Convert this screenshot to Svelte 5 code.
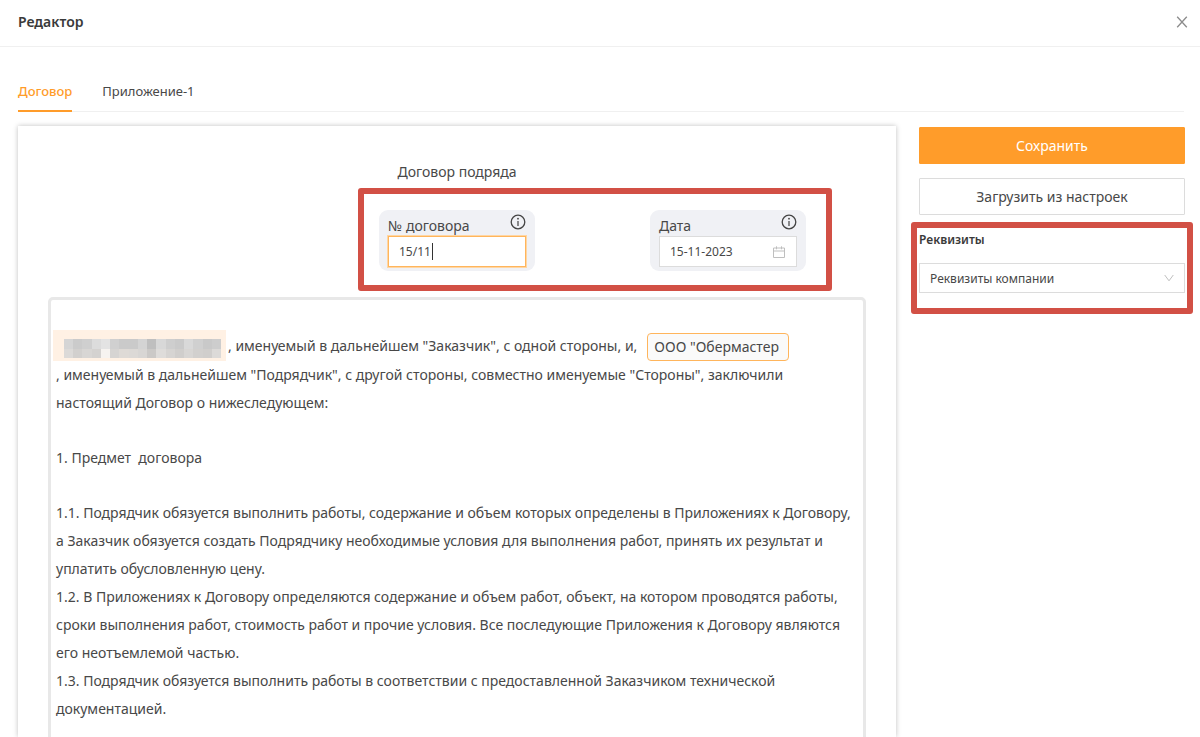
<script lang="ts">
  const tabs = ['Договор', 'Приложение-1'];
  const requisites = ['Реквизиты компании'];

  let activeTab = $state('Договор');
  let contractNumber = $state('15/11');
  let contractDate = $state('15-11-2023');
  let contractor = $state('ООО "Обермастер');
  let requisite = $state('Реквизиты компании');

  // Hidden customer name, two rows of grey blocks
  const maskRows = [
    ['#d5d5d5', '#cbcbcb', '#cfcfcf', '#dcdcdc', '#e3e3e3', '#d0d0d0', '#cacaca', '#cacaca', '#d4d4d4', '#bfbfbf', '#d8d8d8', '#cecece', '#cacaca', '#d9d9d9', '#d0d0d0', '#c9c9c9', '#cdcdcd'],
    ['#dcdad8', '#d2d0ce', '#d8d6d4', '#d4d2d0', '#f6f3f0', '#d6d4d2', '#dedad6', '#dcd9d6', '#d8d6d4', '#cbc9c7', '#dedcda', '#d6d4d2', '#d0cecc', '#d8d6d4', '#d2d0ce', '#d0cecc', '#dcdad8']
  ];

  const intro = [
    ', именуемый в дальнейшем "Подрядчик", с другой стороны, совместно именуемые "Стороны", заключили',
    'настоящий Договор о нижеследующем:'
  ];

  const clauses = [
    '1.1. Подрядчик обязуется выполнить работы, содержание и объем которых определены в Приложениях к Договору,',
    'а Заказчик обязуется создать Подрядчику необходимые условия для выполнения работ, принять их результат и',
    'уплатить обусловленную цену.',
    '1.2. В Приложениях к Договору определяются содержание и объем работ, объект, на котором проводятся работы,',
    'сроки выполнения работ, стоимость работ и прочие условия. Все последующие Приложения к Договору являются',
    'его неотъемлемой частью.',
    '1.3. Подрядчик обязуется выполнить работы в соответствии с предоставленной Заказчиком технической',
    'документацией.'
  ];
</script>

{#snippet infoIcon()}
  <svg class="info" viewBox="0 0 16 16" aria-hidden="true">
    <circle cx="8" cy="8" r="6.8" fill="none" stroke="#444" stroke-width="1.3" />
    <path d="M8 7v5" stroke="#444" stroke-width="1.2" />
    <circle cx="8" cy="4.7" r="0.9" fill="#444" />
  </svg>
{/snippet}

<div class="editor">
  <header class="header">
    <h1>Редактор</h1>
    <button class="close" aria-label="Закрыть">
      <svg viewBox="0 0 12 12" aria-hidden="true">
        <path d="M1.2 0.8 10.8 11.2M10.8 0.8 1.2 11.2" fill="none" stroke="#8c8c8c" stroke-width="1.3" />
      </svg>
    </button>
  </header>

  <nav class="tabs">
    {#each tabs as tab}
      <button class="tab" class:active={activeTab === tab} onclick={() => (activeTab = tab)}>{tab}</button>
    {/each}
  </nav>

  <main class="body">
    <section class="page">
      <h2>Договор подряда</h2>

      <div class="fields highlight">
        <div class="field">
          <div class="field-head">
            <label for="number">№ договора</label>
            {@render infoIcon()}
          </div>
          <div class="control focused">
            <input id="number" class="number" bind:value={contractNumber} />
            <span class="caret"></span>
          </div>
        </div>

        <div class="field">
          <div class="field-head">
            <label for="date">Дата</label>
            {@render infoIcon()}
          </div>
          <div class="control">
            <input id="date" class="date" bind:value={contractDate} />
            <svg class="calendar" viewBox="0 0 12 12" aria-hidden="true">
              <path d="M0.5 2h11v9.5h-11zM0.5 5h11M3.5 0.3v3M8.5 0.3v3" fill="none" stroke="#bfbfbf" />
            </svg>
          </div>
        </div>
      </div>

      <article class="text">
        <div class="parties">
          <span class="masked">
            <svg viewBox="0 0 17 2" preserveAspectRatio="none" shape-rendering="crispEdges" aria-hidden="true">
              {#each maskRows as row, y}
                {#each row as color, x}
                  <rect {x} {y} width="1" height="1" fill={color} />
                {/each}
              {/each}
            </svg>
          </span>
          <span class="customer">, именуемый в дальнейшем "Заказчик", с одной стороны, и,</span>
          <input class="contractor" aria-label="Подрядчик" bind:value={contractor} />
        </div>
        <p>
          {#each intro as line}<span class="line">{line}</span>{/each}
        </p>
        <h3>1. Предмет&nbsp; договора</h3>
        <p>
          {#each clauses as line}<span class="line">{line}</span>{/each}
        </p>
      </article>
    </section>

    <aside class="side">
      <button class="btn primary">Сохранить</button>
      <button class="btn">Загрузить из настроек</button>
      <div class="requisites highlight">
        <label for="requisite">Реквизиты</label>
        <div class="select">
          <select id="requisite" bind:value={requisite}>
            {#each requisites as item}
              <option value={item}>{item}</option>
            {/each}
          </select>
          <svg viewBox="0 0 10 8" aria-hidden="true">
            <path d="M0.7 1 5 6.8 9.3 1" fill="none" stroke="#bfbfbf" />
          </svg>
        </div>
      </div>
    </aside>
  </main>
</div>

<style>
  :global(body) {
    margin: 0;
    background: #fff;
  }

  .editor {
    height: 100vh;
    display: flex;
    flex-direction: column;
    overflow: hidden;
    font-family: 'Noto Sans', 'Open Sans', sans-serif;
    font-size: 14px;
    color: #484848;
  }

  button,
  input,
  select {
    font: inherit;
    color: inherit;
    box-sizing: border-box;
  }

  .header {
    display: flex;
    flex: none;
    align-items: center;
    justify-content: space-between;
    box-sizing: border-box;
    height: 47px;
    padding: 0 12px 3px 18px;
    border-bottom: 1px solid #f0f0f0;
  }

  h1 {
    margin: 0;
    font-size: 14px;
    font-weight: 600;
    color: #3a3a3a;
  }

  .close {
    display: flex;
    padding: 0;
    border: 0;
    background: none;
    cursor: pointer;
  }

  .close svg {
    width: 12px;
    height: 12px;
  }

  .tabs {
    display: flex;
    flex: none;
    gap: 30px;
    margin: 24px 16px 0 18px;
    border-bottom: 1px solid #f0f0f0;
  }

  .tab {
    height: 41px;
    margin-bottom: -1px;
    padding: 0;
    border: 0;
    border-bottom: 2px solid transparent;
    background: none;
    font-size: 13px;
    cursor: pointer;
  }

  .tab.active {
    border-color: #ff9c2a;
    color: #ff9c2a;
    font-weight: 500;
  }

  .body {
    display: flex;
    flex: 1;
    gap: 23px;
    min-height: 0;
    padding: 14px 15px 0 18px;
  }

  .page {
    flex: 1;
    min-width: 0;
    padding: 34px 30px 0;
    box-shadow: 0 0 5px rgba(0, 0, 0, 0.25);
  }

  h2 {
    margin: 0;
    font-size: 14px;
    font-weight: 400;
    line-height: 24px;
    text-align: center;
  }

  .highlight {
    border: 6px solid #d25045;
    border-radius: 3px;
  }

  .fields {
    display: flex;
    justify-content: space-between;
    width: 427px;
    margin: 4px 34px 6px auto;
    padding: 16px 20px 14px 15px;
  }

  .field {
    box-sizing: border-box;
    width: 156px;
    height: 61px;
    padding: 4px 9px;
    border-radius: 9px;
    background: #f0f1f5;
  }

  .field-head {
    display: flex;
    justify-content: space-between;
    height: 22px;
    line-height: 24px;
  }

  .info {
    width: 16px;
    height: 16px;
  }

  .control {
    display: flex;
    align-items: center;
    box-sizing: border-box;
    height: 31px;
    padding: 0 11px 0 10px;
    border: 1px solid #dcdcdc;
    background: #fff;
    font-size: 12px;
  }

  .control.focused {
    border-color: #ffb55c;
    box-shadow: 0 0 0 1px #ffd6a3;
  }

  .control input {
    min-width: 0;
    padding: 0;
    border: 0;
    outline: 0;
    background: none;
  }

  .number {
    width: 33px;
  }

  .date {
    flex: 1;
  }

  .caret {
    width: 1px;
    height: 17px;
    background: #333;
  }

  .calendar {
    width: 12px;
    height: 12px;
  }

  .text {
    height: 600px;
    padding: 30px 5px 0;
    border: 3px solid #e8e8e8;
    border-radius: 5px;
    line-height: 28px;
    white-space: nowrap;
  }

  .parties {
    display: flex;
    align-items: flex-start;
    height: 31px;
  }

  .masked {
    display: flex;
    box-sizing: border-box;
    width: 173px;
    height: 31px;
    margin-left: -3px;
    margin-right: 2px;
    padding: 9px 5px 3px 11px;
    background: #fff1e4;
  }

  .masked svg {
    width: 157px;
    height: 19px;
  }

  .customer {
    line-height: 32px;
  }

  .contractor {
    width: 142px;
    height: 28px;
    margin-top: 3px;
    margin-left: 10px;
    padding: 0 6px;
    border: 1px solid #ffb55c;
    border-radius: 4px;
    background: #fafafa;
  }

  p,
  h3 {
    margin: 0 0 27px;
    font-size: 14px;
    font-weight: 400;
  }

  .line {
    display: block;
  }

  .side {
    display: flex;
    flex-direction: column;
    width: 266px;
    padding-top: 1px;
  }

  .btn {
    height: 37px;
    margin-bottom: 14px;
    border: 1px solid #dcdcdc;
    border-radius: 1px;
    background: #fff;
    cursor: pointer;
  }

  .btn.primary {
    border-color: #ff9c2a;
    background: #ff9c2a;
    color: #fff;
  }

  .requisites {
    display: flex;
    flex-direction: column;
    gap: 13px;
    margin: -7px -8px 0;
    padding: 2px 2px 15px;
    font-size: 12px;
  }

  .requisites label {
    line-height: 20px;
    font-weight: 600;
    color: #3a3a3a;
  }

  .select {
    display: flex;
    align-items: center;
    box-sizing: border-box;
    height: 30px;
    padding-right: 10px;
    border: 1px solid #dcdcdc;
  }

  .select select {
    flex: 1;
    height: 28px;
    padding: 0 10px;
    border: 0;
    outline: 0;
    background: none;
    appearance: none;
  }

  .select svg {
    width: 10px;
    height: 8px;
  }
</style>
